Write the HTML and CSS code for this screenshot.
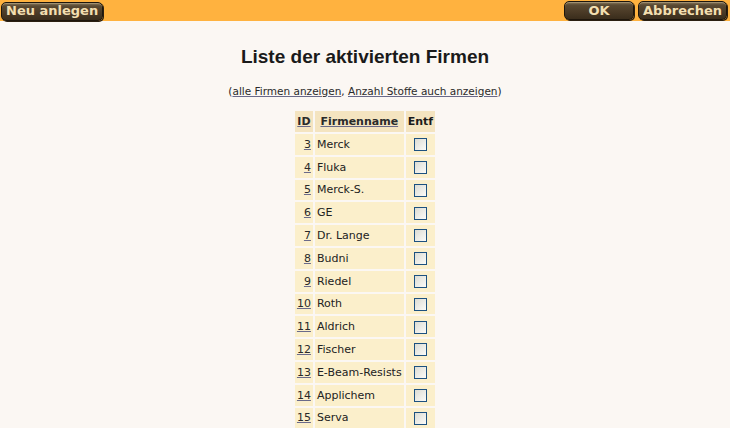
FILE: index.html
```html
<!DOCTYPE html>
<html lang="de">
<head>
<meta charset="utf-8">
<title>Firmen</title>
<link rel="stylesheet" href="styles.css">
</head>
<body>
<div class="topbar">
  <div class="left"><button class="btn">Neu anlegen</button></div>
  <div class="right"><button class="btn btn-ok">OK</button><button class="btn">Abbrechen</button></div>
</div>
<h1 class="title">Liste der aktivierten Firmen</h1>
<p class="links">(<a href="#">alle Firmen anzeigen</a>, <a href="#">Anzahl Stoffe auch anzeigen</a>)</p>
<table class="list">
  <thead>
    <tr><th><a href="#">ID</a></th><th><a href="#">Firmenname</a></th><th>Entf</th></tr>
  </thead>
  <tbody>
    <tr><td class="id"><a href="#">3</a></td><td>Merck</td><td class="cb"><span class="box"></span></td></tr>
    <tr><td class="id"><a href="#">4</a></td><td>Fluka</td><td class="cb"><span class="box"></span></td></tr>
    <tr><td class="id"><a href="#">5</a></td><td>Merck-S.</td><td class="cb"><span class="box"></span></td></tr>
    <tr><td class="id"><a href="#">6</a></td><td>GE</td><td class="cb"><span class="box"></span></td></tr>
    <tr><td class="id"><a href="#">7</a></td><td>Dr. Lange</td><td class="cb"><span class="box"></span></td></tr>
    <tr><td class="id"><a href="#">8</a></td><td>Budni</td><td class="cb"><span class="box"></span></td></tr>
    <tr><td class="id"><a href="#">9</a></td><td>Riedel</td><td class="cb"><span class="box"></span></td></tr>
    <tr><td class="id"><a href="#">10</a></td><td>Roth</td><td class="cb"><span class="box"></span></td></tr>
    <tr><td class="id"><a href="#">11</a></td><td>Aldrich</td><td class="cb"><span class="box"></span></td></tr>
    <tr><td class="id"><a href="#">12</a></td><td>Fischer</td><td class="cb"><span class="box"></span></td></tr>
    <tr><td class="id"><a href="#">13</a></td><td>E-Beam-Resists</td><td class="cb"><span class="box"></span></td></tr>
    <tr><td class="id"><a href="#">14</a></td><td>Applichem</td><td class="cb"><span class="box"></span></td></tr>
    <tr><td class="id"><a href="#">15</a></td><td>Serva</td><td class="cb"><span class="box"></span></td></tr>
  </tbody>
</table>
</body>
</html>
```
FILE: styles.css
```css
html, body {
  margin: 0;
  padding: 0;
  background: #fbf7f3;
  font-family: "DejaVu Sans", Verdana, sans-serif;
  color: #1a1a1a;
}
.topbar {
  background: #ffb23f;
  height: 21px;
  display: flex;
  justify-content: space-between;
  align-items: center;
  padding: 0 1px 0 1px;
}
.right {
  display: flex;
  gap: 4px;
  padding-right: 2px;
}
.btn {
  font-family: "DejaVu Sans", Verdana, sans-serif;
  font-size: 13px;
  font-weight: bold;
  color: #f3dfb0;
  background: linear-gradient(#8a7a5e 0, #5a4a33 3px, #4a3a26 60%, #3a2d1c 100%);
  border: 1px solid #1e160c;
  border-radius: 5px;
  height: 19px;
  padding: 0 4px;
  line-height: 16px;
  box-shadow: 1px 1px 0 #2b1f10, inset 0 1px 0 #a09070;
}
.btn-ok {
  width: 70px;
}
.title {
  font-family: "Liberation Sans", Arial, sans-serif;
  font-size: 19px;
  font-weight: bold;
  text-align: center;
  margin: 25px 0 0 0;
  line-height: 22px;
}
.links {
  font-family: "DejaVu Sans", Verdana, sans-serif;
  font-size: 10.5px;
  text-align: center;
  margin: 16px 0 0 0;
  line-height: 14px;
}
a {
  color: #2a2a2a;
  text-decoration: underline;
  text-decoration-color: #6a6a8a;
}
.list {
  margin: 11px auto 0;
  border-collapse: separate;
  border-spacing: 2px;
  font-family: "DejaVu Sans", Verdana, sans-serif;
  font-size: 11px;
}
.list th {
  background: #f4e4c0;
  font-weight: bold;
  height: 21px;
  padding: 0 2px;
}
.list td {
  background: #fbefcb;
  height: 20.8px;
  padding: 0 2px;
  color: #222;
}
.list td.id {
  text-align: right;
}
.list td.cb {
  text-align: center;
}
.box {
  display: inline-block;
  width: 11px;
  height: 11px;
  border: 1px solid #1c5180;
  background: linear-gradient(135deg, #dcdcd4, #fbfbf8);
  vertical-align: middle;
}
```
